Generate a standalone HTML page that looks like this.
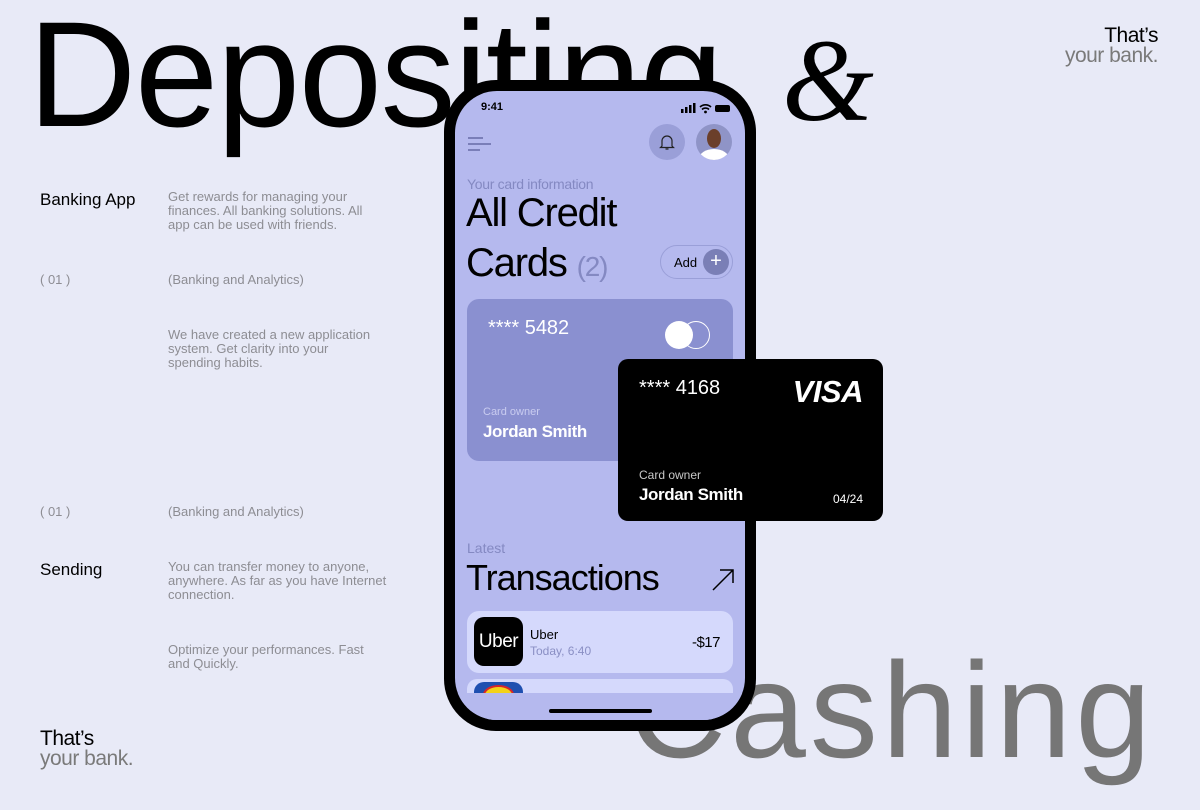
<!DOCTYPE html>
<html><head><meta charset="utf-8"><style>
*{margin:0;padding:0;box-sizing:border-box}
body{width:1200px;height:810px;background:#e8eaf7;position:relative;overflow:hidden;font-family:"Liberation Sans",sans-serif}
.a{position:absolute;white-space:nowrap}
.g{color:#8d8d93;font-size:13px;line-height:14px}
.w{color:#fff}
</style></head><body>
<div class="a" style="left:28px;top:-1px;font-size:150px;letter-spacing:-1.5px;line-height:1;color:#000">Depositing</div>
<div class="a" style="left:782px;top:22px;font-family:'Liberation Serif',serif;font-style:italic;font-size:118px;line-height:1">&amp;</div>
<div class="a" style="left:628px;top:642px;font-size:136px;letter-spacing:4px;line-height:1;color:#767676">Cashing</div>
<div class="a" style="right:42px;top:26px;font-size:21px;line-height:20px;text-align:right;letter-spacing:-0.5px">That’s<br><span style="color:#7a7a7a">your bank.</span></div>
<div class="a" style="left:40px;top:729px;font-size:21px;line-height:20px;letter-spacing:-0.5px">That’s<br><span style="color:#7a7a7a">your bank.</span></div>

<div class="a" style="left:40px;top:190px;font-size:17px">Banking App</div>
<div class="a g" style="left:168px;top:190px">Get rewards for managing your<br>finances. All banking solutions. All<br>app can be used with friends.</div>
<div class="a g" style="left:40px;top:273px">( 01 )</div>
<div class="a g" style="left:168px;top:273px">(Banking and Analytics)</div>
<div class="a g" style="left:168px;top:328px">We have created a new application<br>system. Get clarity into your<br>spending habits.</div>
<div class="a g" style="left:40px;top:505px">( 01 )</div>
<div class="a g" style="left:168px;top:505px">(Banking and Analytics)</div>
<div class="a" style="left:40px;top:560px;font-size:17px">Sending</div>
<div class="a g" style="left:168px;top:560px">You can transfer money to anyone,<br>anywhere. As far as you have Internet<br>connection.</div>
<div class="a g" style="left:168px;top:643px">Optimize your performances. Fast<br>and Quickly.</div>

<div class="a" style="left:444px;top:80px;width:312px;height:651px;background:#000;border-radius:52px;padding:11px">
 <div style="position:relative;width:290px;height:629px;background:#b5b9ee;border-radius:42px;overflow:hidden">
  <div class="a" style="left:26px;top:10px;font-size:11px;font-weight:bold">9:41</div>
  <svg class="a" style="left:224px;top:12px" width="54" height="11"><rect x="2" y="6" width="2.5" height="4" fill="#000"/><rect x="6" y="4" width="2.5" height="6" fill="#000"/><rect x="10" y="2" width="2.5" height="8" fill="#000"/><rect x="14" y="0" width="2.5" height="10" fill="#000"/><path d="M21 4a8 8 0 0 1 11 0M23 6.5a5 5 0 0 1 7 0" stroke="#000" stroke-width="1.6" fill="none"/><circle cx="26.5" cy="9" r="1.4"/><rect x="36" y="2" width="15" height="7" rx="2" fill="#000"/></svg>
  <svg class="a" style="left:12px;top:45px" width="26" height="16"><path d="M1 2h15M1 8h23M1 14h12" stroke="#666aa6" stroke-width="1.6"/></svg>
  <div class="a" style="left:194px;top:33px;width:36px;height:36px;border-radius:50%;background:#9a9fd8"></div>
  <svg class="a" style="left:204px;top:42px" width="16" height="18"><path d="M3 13V8a5 5 0 0 1 10 0v5l1.5 1.5h-13zM6.5 16h3" stroke="#222" stroke-width="1.2" fill="none"/></svg>
  <div class="a" style="left:241px;top:33px;width:36px;height:36px;border-radius:50%;background:#8f94c7;overflow:hidden"><div style="position:absolute;left:11px;top:5px;width:14px;height:19px;border-radius:50%;background:#6b3f2a"></div><div style="position:absolute;left:3px;top:25px;width:30px;height:20px;border-radius:50%;background:#fff"></div></div>
  <div class="a" style="left:12px;top:85px;font-size:14px;color:#8489c2;letter-spacing:-0.3px">Your card information</div>
  <div class="a" style="left:11px;top:100px;font-size:40px;letter-spacing:-1.2px">All Credit</div>
  <div class="a" style="left:11px;top:150px;font-size:40px;letter-spacing:-1.2px">Cards <span style="font-size:28px;color:#8489c2">(2)</span></div>
  <div class="a" style="left:205px;top:154px;width:73px;height:34px;border:1px solid #9a9fd8;border-radius:17px"><span class="a" style="left:13px;top:9px;font-size:13px">Add</span><div class="a" style="left:42px;top:3px;width:26px;height:26px;border-radius:50%;background:#7a7fb6;color:#fff;text-align:center;line-height:25px;font-size:20px">+</div></div>
  <div class="a" style="left:12px;top:208px;width:266px;height:162px;background:#8a90d0;border-radius:12px">
   <div class="a w" style="left:21px;top:18px;font-size:20px">**** 5482</div>
   <div class="a" style="left:215px;top:22px;width:28px;height:28px;border-radius:50%;border:1.5px solid #fff"></div>
   <div class="a" style="left:198px;top:22px;width:28px;height:28px;border-radius:50%;background:#fff"></div>
   <div class="a" style="left:16px;top:107px;font-size:11px;color:#c9ccf0">Card owner</div>
   <div class="a w" style="left:16px;top:123px;font-size:17px;font-weight:bold;letter-spacing:-0.4px">Jordan Smith</div>
  </div>
  <div class="a" style="left:12px;top:449px;font-size:14px;color:#8489c2">Latest</div>
  <div class="a" style="left:11px;top:466px;font-size:36px;letter-spacing:-1px">Transactions</div>
  <svg class="a" style="left:256px;top:477px" width="24" height="24"><path d="M2 22L22 2M9 2h13v13" stroke="#000" stroke-width="1.5" fill="none"/></svg>
  <div class="a" style="left:12px;top:520px;width:266px;height:62px;background:#d5d9fc;border-radius:12px">
   <div class="a" style="left:7px;top:6px;width:49px;height:49px;background:#000;border-radius:10px;color:#fff;font-size:19px;text-align:center;line-height:49px;letter-spacing:-0.5px">Uber</div>
   <div class="a" style="left:63px;top:16px;font-size:13px">Uber</div>
   <div class="a" style="left:63px;top:33px;font-size:12px;color:#8a8fc4">Today, 6:40</div>
   <div class="a" style="right:13px;top:23px;font-size:15px;letter-spacing:-0.5px">-$17</div>
  </div>
  <div class="a" style="left:12px;top:588px;width:266px;height:14px;background:#d5d9fc;border-radius:10px 10px 0 0;overflow:hidden"><div style="position:absolute;left:7px;top:3px;width:49px;height:20px;background:#1e4fb0;border-radius:10px"><div style="position:absolute;left:9px;top:3px;width:31px;height:20px;border-radius:50%;background:#f3d21a;border:2px solid #d7262b"></div></div></div>
  <div class="a" style="left:0;top:602px;width:290px;height:30px;background:#b5b9ee"></div>
  <div class="a" style="left:94px;top:618px;width:103px;height:4px;background:#000;border-radius:2px"></div>
 </div>
</div>

<div class="a" style="left:618px;top:359px;width:265px;height:162px;background:#000;border-radius:10px">
 <div class="a w" style="left:21px;top:18px;font-size:20px">**** 4168</div>
 <div class="a w" style="right:20px;top:15px;font-size:31px;font-weight:bold;font-style:italic;letter-spacing:-0.5px">VISA</div>
 <div class="a" style="left:21px;top:109px;font-size:12px;color:#c8c8c8">Card owner</div>
 <div class="a w" style="left:21px;top:126px;font-size:17px;font-weight:bold;letter-spacing:-0.4px">Jordan Smith</div>
 <div class="a w" style="right:20px;top:133px;font-size:12px">04/24</div>
</div>
</body></html>
